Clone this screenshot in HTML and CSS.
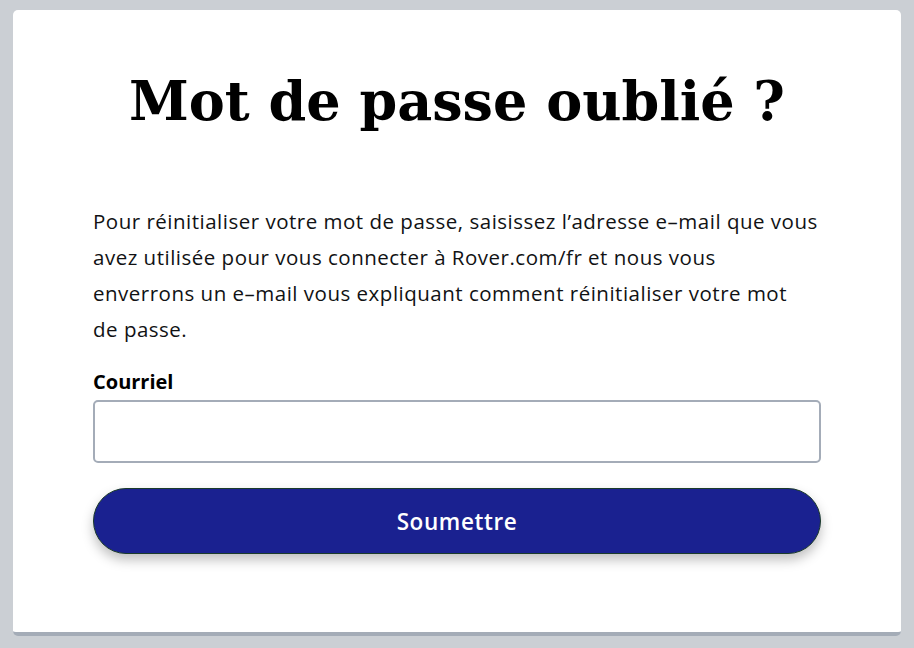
FILE: index.html
```html
<!DOCTYPE html>
<html lang="fr">
<head>
<meta charset="utf-8">
<link rel="stylesheet" href="styles.css">
</head>
<body>
<main class="card">
  <h1 class="title">Mot de passe oublié ?</h1>
  <p class="intro">Pour réinitialiser votre mot de passe, saisissez l’adresse e–mail que vous avez utilisée pour vous connecter à Rover.com/fr et nous vous enverrons un e–mail vous expliquant comment réinitialiser votre mot de&nbsp;passe.</p>
  <form class="form">
    <label class="label" for="email">Courriel</label>
    <input class="input" id="email" type="email">
    <button class="submit" type="button">Soumettre</button>
  </form>
</main>
</body>
</html>
```

FILE: styles.css
```css
html, body {
  margin: 0;
  padding: 0;
  background: #cbcfd4;
  height: 100%;
}
body {
  padding: 10px 13px 0 13px;
  box-sizing: border-box;
  font-family: "Open Sans", "Lato", sans-serif;
  color: #111214;
}
.card {
  background: #fff;
  border-radius: 5px;
  border-bottom: 4px solid #a4acb7;
  height: 622px;
  padding: 0 80px;
  box-sizing: content-box;
}
.title {
  margin: 0;
  padding-top: 59px;
  font-family: "DejaVu Serif", "Liberation Serif", serif;
  font-weight: 900;
  font-size: 54px;
  line-height: 64px;
  text-align: center;
  color: #000;
}
.intro {
  margin: 70px 0 0 0;
  font-size: 20.5px;
  line-height: 36px;
  letter-spacing: 0.5px;
  max-width: 728px;
}
.form {
  display: flex;
  flex-direction: column;
  margin-top: 22px;
}
.label {
  font-weight: 700;
  font-size: 20px;
  line-height: 26px;
  color: #000;
  margin-bottom: 5px;
}
.input {
  height: 63px;
  box-sizing: border-box;
  border: 2px solid #a4acb8;
  border-radius: 5px;
  font-size: 18px;
  padding: 0 12px;
  outline: none;
}
.submit {
  margin-top: 25px;
  height: 66px;
  border-radius: 33px;
  background: #1a2190;
  border: 1px solid #1b3b2a;
  color: #fff;
  font-family: "Open Sans", "Lato", sans-serif;
  font-size: 22.5px;
  font-weight: 600;
  letter-spacing: 0.6px;
  box-shadow: 0 6px 12px rgba(0,0,0,0.25);
}
```
